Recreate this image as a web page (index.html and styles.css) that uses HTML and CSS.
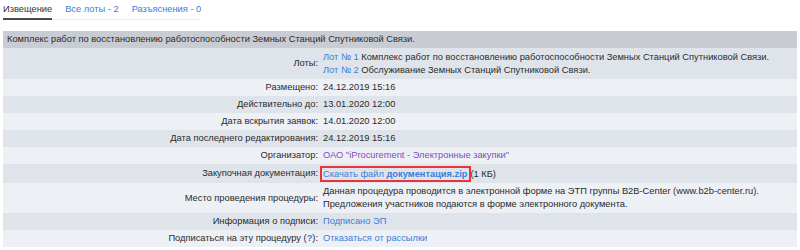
FILE: index.html
```html
<!DOCTYPE html>
<html lang="ru">
<head>
    <meta charset="UTF-8">
    <title>Извещение</title>
    <link rel="stylesheet" href="styles.css">
</head>
<body>

    <!-- Вкладки -->
    <div class="tabs">
        <a class="tab active">Извещение</a>
        <a class="tab">Все лоты - 2</a>
        <a class="tab">Разъяснения - 0</a>
    </div>

    <!-- Карточка процедуры -->
    <table class="notice">
        <thead>
            <tr>
                <th colspan="2">Комплекс работ по восстановлению работоспособности Земных Станций Спутниковой Связи.</th>
            </tr>
        </thead>
        <tbody>
            <tr class="dark lots">
                <td class="label">Лоты:</td>
                <td class="value">
                    <a href="#">Лот № 1</a> Комплекс работ по восстановлению работоспособности Земных Станций Спутниковой Связи.<br>
                    <a href="#">Лот № 2</a> Обслуживание Земных Станций Спутниковой Связи.
                </td>
            </tr>
            <tr>
                <td class="label">Размещено:</td>
                <td class="value">24.12.2019 15:16</td>
            </tr>
            <tr class="dark">
                <td class="label">Действительно до:</td>
                <td class="value">13.01.2020 12:00</td>
            </tr>
            <tr>
                <td class="label">Дата вскрытия заявок:</td>
                <td class="value">14.01.2020 12:00</td>
            </tr>
            <tr class="dark">
                <td class="label">Дата последнего редактирования:</td>
                <td class="value">24.12.2019 15:16</td>
            </tr>
            <tr>
                <td class="label">Организатор:</td>
                <td class="value"><a href="#" class="visited">ОАО "iProcurement - Электронные закупки"</a></td>
            </tr>
            <tr class="dark doc">
                <td class="label">Закупочная документация:</td>
                <td class="value"><span class="highlight"><a href="#">Скачать файл <b>документация.zip</b></a></span>(1 КБ)</td>
            </tr>
            <tr class="place">
                <td class="label">Место проведения процедуры:</td>
                <td class="value">Данная процедура проводится в электронной форме на ЭТП группы B2B-Center (www.b2b-center.ru).<br>
                    Предложения участников подаются в форме электронного документа.</td>
            </tr>
            <tr class="dark">
                <td class="label">Информация о подписи:</td>
                <td class="value"><a href="#">Подписано ЭП</a></td>
            </tr>
            <tr>
                <td class="label">Подписаться на эту процедуру (<a href="#"><b>?</b></a>):</td>
                <td class="value"><a href="#">Отказаться от рассылки</a></td>
            </tr>
        </tbody>
    </table>

</body>
</html>
```

FILE: styles.css
```css
/* Algemeen */
body {
    font-family: "Liberation Sans", Arial, sans-serif;
    font-size: 9.3px;
    color: #2b2b2b;
    background-color: #fff;
    margin: 0;
    padding: 0 3px;
}

a {
    color: #3b7dd8;
    text-decoration: none;
}

a.visited {
    color: #7d4fc0;
}

/* Вкладки */
.tabs {
    display: flex;
    gap: 13px;
    width: 197px;
    height: 19px;
    border-bottom: 1px solid #ebebeb;
    white-space: nowrap;
}

.tab {
    padding-top: 4px;
    color: #3b7dd8;
}

.tab.active {
    color: #333;
    border-bottom: 2px solid #4a4a4a;
    margin-bottom: -1px;
}

/* Таблица */
.notice {
    width: 794px;
    border-collapse: collapse;
    margin-top: 11px;
}

.notice th {
    background-color: #c9cdd3;
    text-align: left;
    font-weight: normal;
    height: 17px;
    padding: 0 4px;
    line-height: 13px;
}

.notice td {
    background-color: #edf0f4;
    height: 17px;
    padding: 0;
    line-height: 13px;
    vertical-align: middle;
}

.notice tr.dark td {
    background-color: #dfe4eb;
}

.notice tr.lots td {
    height: 31px;
}

.notice tr.doc td {
    height: 19px;
}

.notice tr.place td {
    height: 30px;
}

.notice td.label {
    width: 315px;
    text-align: right;
    padding-right: 4px;
}

.notice td.value {
    padding-left: 1px;
}

.highlight {
    display: inline-block;
    border: 2px solid #e8343a;
    line-height: 12px;
    padding: 0 1px 0 1px;
    margin-left: -3px;
}
```
